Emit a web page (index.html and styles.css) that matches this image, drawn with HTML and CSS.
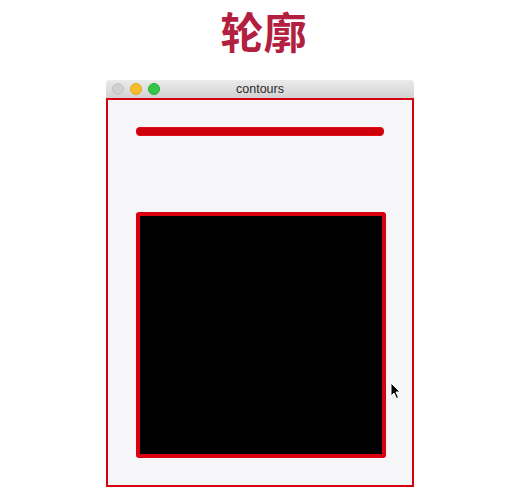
FILE: index.html
```html
<!DOCTYPE html>
<html>
<head>
<meta charset="utf-8">
<link rel="stylesheet" href="styles.css">
</head>
<body>
<h1 class="title">轮廓</h1>
<div class="window">
  <div class="titlebar">
    <div class="lights">
      <span class="light gray"></span>
      <span class="light yellow"></span>
      <span class="light green"></span>
    </div>
    <span class="wtitle">contours</span>
  </div>
  <div class="content">
    <div class="bar"></div>
    <div class="square"></div>
  </div>
  <svg class="cursor" width="12" height="18" viewBox="0 0 12 18"><path d="M1 1 L1 14 L4 11 L6.5 16.5 L8.5 15.5 L6 10 L10 10 Z" fill="#000" stroke="#fff" stroke-width="1"/></svg>
</div>
</body>
</html>
```
FILE: styles.css
```css
html, body { margin: 0; padding: 0; background: #fff; }
body { width: 525px; height: 502px; overflow: hidden; }
.title {
  margin: 0;
  height: 80px;
  padding-top: 0;
  box-sizing: border-box;
  text-align: center;
  font-family: "Noto Sans CJK SC", sans-serif;
  font-weight: 700;
  font-size: 43px;
  line-height: 60px;
  color: #b3203f;
  padding-left: 2px;
}
.window {
  position: relative;
  margin-left: 106px;
  width: 308px;
}
.titlebar {
  position: relative;
  height: 18px;
  background: linear-gradient(#ebebeb, #d2d2d2);
  border-radius: 3px 3px 0 0;
  display: flex;
  align-items: center;
  justify-content: center;
}
.lights {
  position: absolute;
  left: 6px;
  top: 3px;
  display: flex;
  gap: 6px;
}
.light { width: 12px; height: 12px; border-radius: 50%; display: block; box-sizing: border-box; }
.gray { background: #d0d0d0; border: 1px solid #c2c2c2; }
.yellow { background: #f5bd2c; border: 1px solid #e0a820; }
.green { background: #33c648; border: 1px solid #24ad38; }
.wtitle {
  font-family: "Liberation Sans", "Helvetica", sans-serif;
  font-size: 12.5px;
  color: #2a2a2a;
  line-height: 18px;
}
.content {
  height: 389px;
  box-sizing: border-box;
  border: 2px solid #d6000f;
  background: #f6f6f9;
  padding: 27px 28px 27px 28px;
  display: flex;
  flex-direction: column;
  align-items: flex-start;
}
.bar {
  width: 248px;
  height: 9px;
  border-radius: 5px;
  background: #cf000a;
  box-shadow: inset 0 0 0 1px #e0101a;
}
.square {
  margin-top: 76px;
  width: 250px;
  height: 246px;
  box-sizing: border-box;
  border: 4px solid #db0010;
  border-radius: 3px;
  background: #000;
}
.cursor {
  position: absolute;
  left: 284px;
  top: 302px;
}
```
